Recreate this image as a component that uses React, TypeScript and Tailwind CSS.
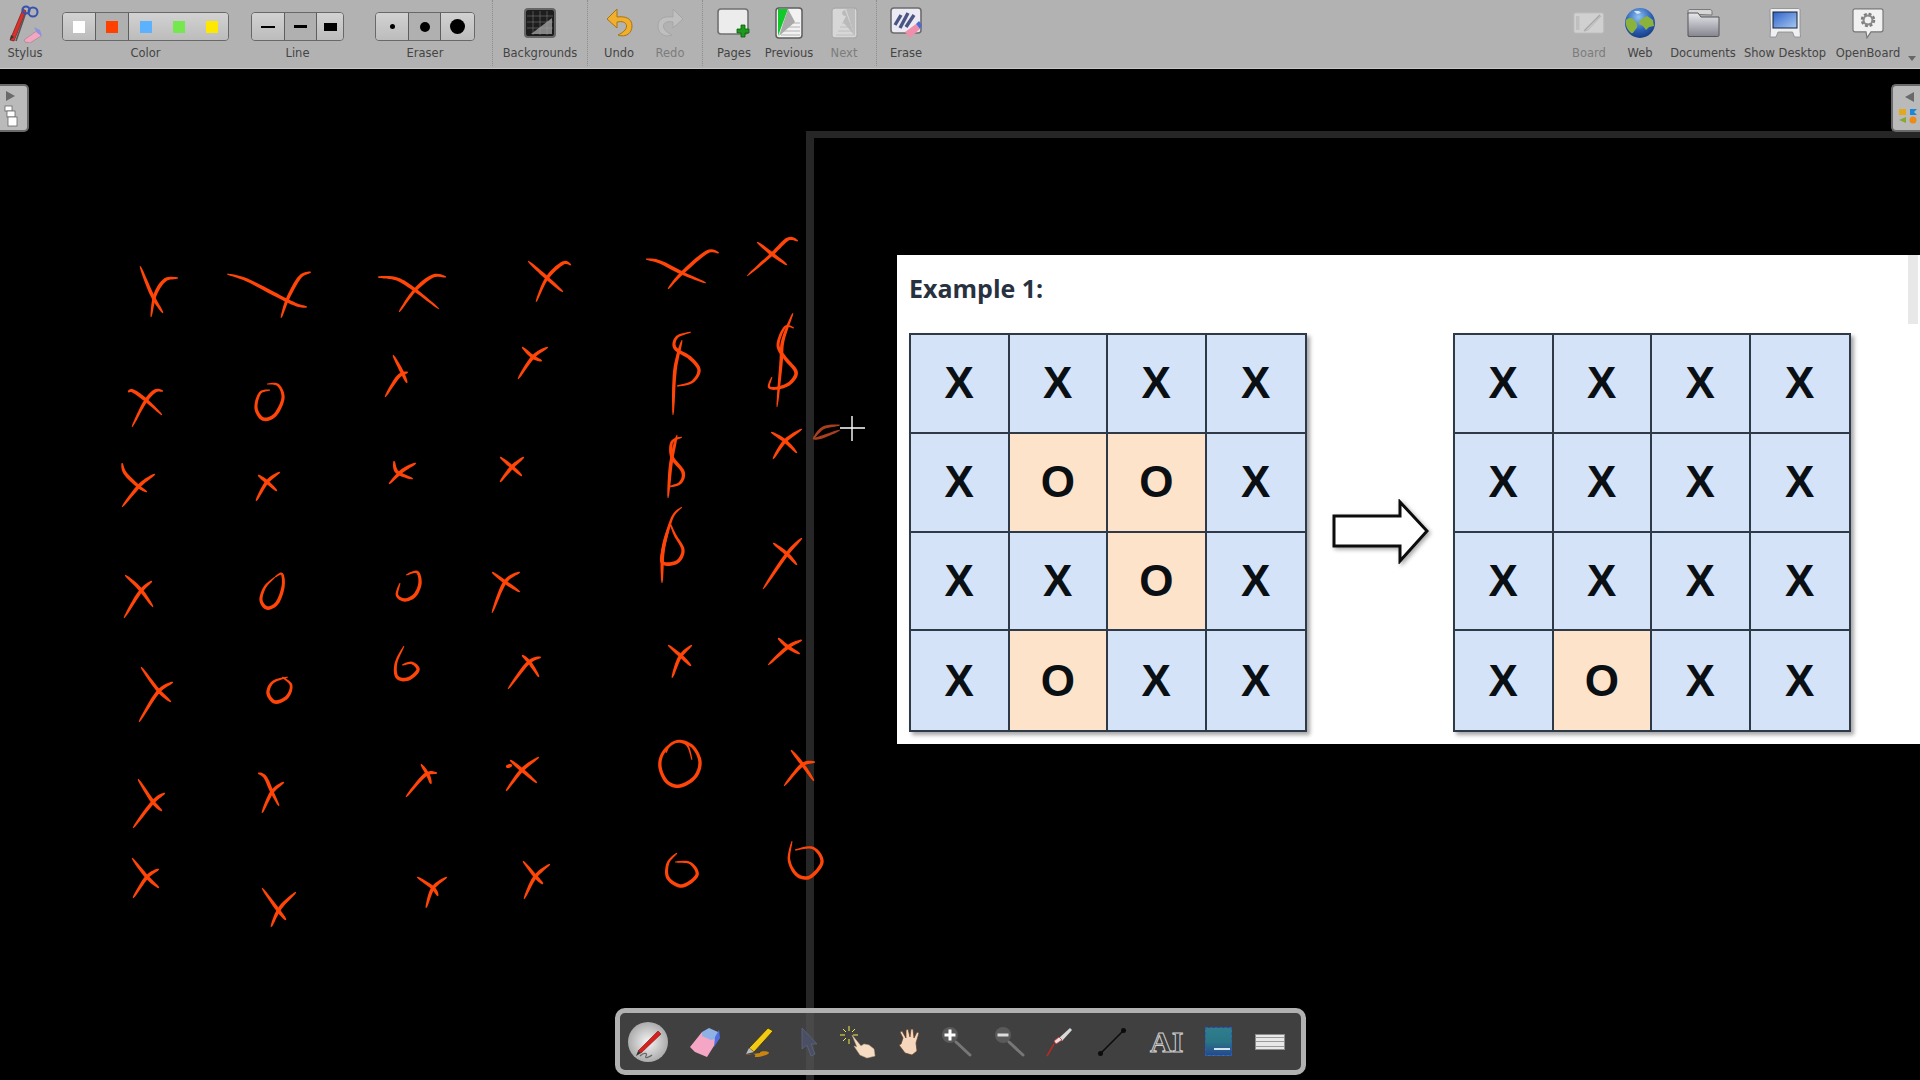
import type { ReactNode } from "react";

type Pt = [number, number];

const INK: Pt[][] = [
  // row 1
  [[140, 266], [152, 295], [163, 313]],
  [[178, 278], [165, 280], [155, 295], [151, 317]],
  [[227, 274], [247, 280], [280, 297], [297, 305], [307, 307]],
  [[311, 272], [300, 277], [288, 298], [281, 318]],
  [[378, 277], [397, 279], [415, 290], [439, 309]],
  [[446, 277], [433, 276], [415, 290], [399, 312]],
  [[528, 261], [547, 278], [563, 292]],
  [[571, 265], [563, 263], [547, 278], [536, 302]],
  [[646, 259], [660, 262], [682, 273], [706, 283]],
  [[719, 253], [707, 252], [682, 273], [668, 289]],
  [[757, 242], [772, 254], [787, 265]],
  [[798, 241], [788, 239], [772, 254], [747, 276]],
  // row 2
  [[128, 392], [133, 391], [147, 401], [162, 415]],
  [[163, 391], [155, 391], [145, 402], [132, 427]],
  [[270, 390], [260, 393], [256, 408], [263, 419], [275, 415], [283, 398], [278, 385], [267, 384]],
  [[393, 355], [402, 372], [407, 383]],
  [[408, 372], [398, 377], [385, 397]],
  [[522, 347], [533, 357], [542, 361]],
  [[548, 347], [533, 357], [518, 379]],
  [[691, 332], [677, 337], [675, 348], [690, 358], [699, 370], [692, 382], [677, 386]],
  [[682, 340], [675, 370], [673, 415]],
  [[794, 328], [785, 327], [778, 345], [785, 358], [796, 372], [790, 383], [778, 388], [769, 387], [772, 377]],
  [[793, 313], [783, 340], [781, 363], [777, 407]],
  // row 3
  [[122, 463], [125, 473], [138, 486], [147, 492]],
  [[155, 474], [140, 485], [122, 507]],
  [[258, 475], [267, 482], [277, 491]],
  [[280, 472], [267, 482], [256, 501]],
  [[394, 461], [397, 472], [413, 479]],
  [[416, 463], [402, 471], [389, 484]],
  [[500, 457], [512, 467], [522, 476]],
  [[524, 457], [512, 467], [500, 482]],
  [[682, 437], [672, 442], [672, 457], [683, 472], [680, 483], [668, 487]],
  [[677, 435], [671, 463], [668, 498]],
  [[771, 432], [785, 441], [797, 453]],
  [[802, 429], [785, 441], [773, 459]],
  // row 4
  [[125, 575], [140, 589], [153, 607]],
  [[152, 581], [140, 592], [124, 618]],
  [[275, 577], [265, 587], [261, 600], [267, 608], [277, 603], [283, 587], [282, 574], [275, 577]],
  [[406, 575], [417, 572], [420, 583], [415, 595], [405, 600], [397, 595], [400, 583]],
  [[492, 572], [505, 582], [520, 592]],
  [[520, 572], [505, 582], [492, 613]],
  [[682, 507], [672, 518], [663, 550], [663, 563], [677, 562], [683, 550], [675, 535], [670, 523]],
  [[670, 523], [663, 550], [662, 583]],
  [[773, 543], [787, 554], [797, 565]],
  [[802, 538], [787, 554], [763, 589]],
  // row 5
  [[141, 667], [158, 690], [171, 702]],
  [[173, 682], [158, 692], [139, 722]],
  [[288, 677], [273, 682], [268, 693], [275, 702], [287, 697], [291, 685], [282, 677]],
  [[404, 646], [396, 663], [397, 677], [408, 679], [418, 670], [412, 663], [402, 665]],
  [[522, 655], [530, 663], [539, 677]],
  [[541, 657], [528, 663], [508, 689]],
  [[668, 645], [682, 657], [691, 666]],
  [[692, 645], [680, 657], [672, 678]],
  [[778, 638], [788, 647], [800, 654]],
  [[802, 640], [788, 647], [768, 665]],
  // row 6
  [[138, 779], [153, 802], [162, 811]],
  [[165, 793], [153, 802], [133, 828]],
  [[258, 773], [265, 777], [272, 792], [279, 806]],
  [[284, 782], [272, 792], [262, 813]],
  [[421, 764], [428, 775], [431, 784]],
  [[437, 773], [425, 775], [406, 797]],
  [[510, 760], [522, 770], [537, 783]],
  [[539, 757], [522, 770], [506, 791]],
  [[506, 767], [512, 765]],
  [[692, 760], [687, 745], [675, 742], [663, 753], [660, 767], [667, 782], [680, 786], [695, 777], [700, 762], [693, 747], [680, 741], [670, 745], [666, 753]],
  [[791, 750], [803, 765], [814, 781]],
  [[815, 762], [802, 765], [784, 786]],
  // row 7
  [[132, 858], [147, 877], [159, 888]],
  [[159, 869], [147, 877], [133, 898]],
  [[262, 888], [278, 910], [286, 920]],
  [[296, 892], [280, 908], [271, 927]],
  [[417, 877], [433, 888], [438, 896]],
  [[447, 877], [433, 888], [426, 908]],
  [[523, 861], [536, 877], [543, 884]],
  [[550, 864], [535, 877], [524, 899]],
  [[677, 853], [668, 863], [668, 878], [682, 886], [697, 875], [690, 863], [675, 862]],
  [[792, 841], [789, 860], [797, 875], [810, 877], [822, 862], [813, 848], [795, 850]],
];

const GRID_A = ["XXXX", "XOOX", "XXOX", "XOXX"];
const GRID_B = ["XXXX", "XXXX", "XXXX", "XOXX"];

// sample a catmull-rom curve through the points, then build a tapered ribbon
function ribbon(pts: Pt[], width: number) {
  const out: Pt[] = [];
  const at = (i: number) => pts[Math.max(0, Math.min(pts.length - 1, i))];
  for (let i = 0; i < pts.length - 1; i++) {
    const [p0, p1, p2, p3] = [at(i - 1), at(i), at(i + 1), at(i + 2)];
    for (let s = 0; s < 8; s++) {
      const t = s / 8;
      const f = (k: 0 | 1) =>
        0.5 *
        (2 * p1[k] +
          (p2[k] - p0[k]) * t +
          (2 * p0[k] - 5 * p1[k] + 4 * p2[k] - p3[k]) * t * t +
          (3 * p1[k] - p0[k] - 3 * p2[k] + p3[k]) * t * t * t);
      out.push([f(0), f(1)]);
    }
  }
  out.push(pts[pts.length - 1]);
  const left: string[] = [];
  const right: string[] = [];
  out.forEach((p, i) => {
    const a = out[Math.max(0, i - 1)];
    const b = out[Math.min(out.length - 1, i + 1)];
    const dx = b[0] - a[0];
    const dy = b[1] - a[1];
    const len = Math.hypot(dx, dy) || 1;
    const u = i / (out.length - 1);
    const w = (width / 2) * (0.2 + 0.8 * Math.pow(Math.sin(Math.PI * u), 0.6));
    left.push(`${(p[0] - (dy / len) * w).toFixed(1)} ${(p[1] + (dx / len) * w).toFixed(1)}`);
    right.unshift(`${(p[0] + (dy / len) * w).toFixed(1)} ${(p[1] - (dx / len) * w).toFixed(1)}`);
  });
  return `M${left.join("L")}L${right.join("L")}Z`;
}

function InkLayer() {
  return (
    <svg className="absolute left-0 top-0" width="1920" height="1080" viewBox="0 0 1920 1080">
      {INK.map((pts, i) => (
        <path key={i} d={ribbon(pts, 3.6)} fill="#ff4508" />
      ))}
      <path d={ribbon([[813, 439], [823, 428], [840, 425]], 3)} fill="#a8401f" />
      <path d={ribbon([[840, 430], [822, 437], [813, 439]], 3)} fill="#a8401f" />
      <path d="M852 416v25M840 428h25" stroke="#000" strokeWidth="3" />
      <path d="M852 416v25M840 428h25" stroke="#fff" strokeWidth="1.4" />
    </svg>
  );
}

function TicBoard({ rows }: { rows: string[] }) {
  return (
    <div className="grid h-[399px] w-[398px] shrink-0 grid-cols-4 grid-rows-4 border-2 border-[#2e3a47] shadow-[3px_3px_4px_rgba(0,0,0,0.35)]">
      {rows.flatMap((row, r) =>
        row.split("").map((c, i) => (
          <div
            key={`${r}-${i}`}
            className={`flex items-center justify-center border-[#2e3a47] text-[44px] font-bold text-[#0a0f14] ${
              c === "O" ? "bg-[#fde3c9]" : "bg-[#d4e3f8]"
            } ${i < 3 ? "border-r-2" : ""} ${r < 3 ? "border-b-2" : ""}`}
          >
            {c}
          </div>
        ))
      )}
    </div>
  );
}

function Seg({ children, active, wide, last }: { children: ReactNode; active?: boolean; wide?: string; last?: boolean }) {
  return (
    <div
      className={`flex h-full items-center justify-center ${wide ?? "w-[33px]"} ${last ? "" : "border-r border-[#5e5e5e]"} ${
        active ? "bg-[#b0b0b0]" : "bg-linear-to-b from-[#d2d2d2] to-[#bcbcbc]"
      }`}
    >
      {children}
    </div>
  );
}

function SegLabel({ label, w, ml, children }: { label: string; w: string; ml: string; children: ReactNode }) {
  return (
    <div className={`flex shrink-0 flex-col items-center ${w} ${ml}`}>
      <div className="mt-[12px] flex h-[29px] w-full overflow-hidden rounded-[4px] border border-[#686868]">{children}</div>
      <span className="mt-[5px] text-[11.5px] leading-[14px] text-[#444]">{label}</span>
    </div>
  );
}

function Tool({ label, w, ml, off, children }: { label: string; w: string; ml?: string; off?: boolean; children: ReactNode }) {
  return (
    <div className={`flex shrink-0 flex-col items-center ${w} ${ml ?? ""}`}>
      <div className={`flex h-[46px] items-center justify-center ${off ? "opacity-60" : ""}`}>{children}</div>
      <span className={`text-[11.5px] leading-[14px] whitespace-nowrap ${off ? "text-[#7c7c7c]" : "text-[#444]"}`}>{label}</span>
    </div>
  );
}

function Sep({ ml }: { ml: string }) {
  return <div className={`h-[66px] w-0 shrink-0 border-l border-dotted border-[#8e8e8e] ${ml}`} />;
}

function StylusIcon() {
  return (
    <svg width="36" height="40" viewBox="0 0 36 40">
      <path d="M3 37 16 6l3 2L7 38z" fill="#d8302c" stroke="#7a1a18" strokeWidth=".7" />
      <path d="M3 37l1-5 3 2z" fill="#333" />
      <path d="M9 38 19 9" stroke="#555" strokeWidth="1.6" />
      <circle cx="26" cy="9" r="4.5" fill="none" stroke="#3552b0" strokeWidth="2" />
      <circle cx="19" cy="7" r="3.6" fill="none" stroke="#3552b0" strokeWidth="2" />
      <path d="M17 37 31 27l3 6-11 7-5-1z" fill="#f2a6c2" stroke="#9c7d8c" strokeWidth=".6" />
      <path d="M27 24l6 3 2 6-5-3z" fill="#8b93e0" />
    </svg>
  );
}

function BackgroundsIcon() {
  return (
    <svg width="32" height="30" viewBox="0 0 32 30">
      <rect x="1" y="1" width="30" height="28" rx="3" fill="#1d1d1d" stroke="#666" strokeWidth="2" />
      <path d="M3 8h26M3 14h26M3 20h26M9 3v24M16 3v24M23 3v24" stroke="#777" strokeWidth=".6" />
      <path d="M7 26 28 10v16z" fill="#a8a8a8" opacity=".75" />
    </svg>
  );
}

function UndoIcon({ gray }: { gray?: boolean }) {
  return (
    <svg width="27" height="30" viewBox="0 0 27 30" className={gray ? "-scale-x-100" : ""}>
      <path
        d="M11 1 1 11l10 9v-6c5-1 9 0 9.500 3.500C21 22 16 25 12 27c8 3 14-2 14-9 0-8-7-10-15-9z"
        fill={gray ? "#c9c9c9" : "#f0b02d"}
        stroke={gray ? "#9c9c9c" : "#a67512"}
        strokeWidth="1"
      />
    </svg>
  );
}

function PagesIcon() {
  return (
    <svg width="34" height="34" viewBox="0 0 34 34">
      <rect x="1" y="3" width="30" height="25" rx="3" fill="#ececec" stroke="#707070" strokeWidth="1.600" />
      <path d="M22 23h4v-4h4v4h4v4h-4v4h-4v-4h-4z" transform="translate(-2 0)" fill="#1b9c1b" stroke="#0d5c0d" strokeWidth=".8" />
    </svg>
  );
}

function PrevIcon() {
  return (
    <svg width="28" height="32" viewBox="0 0 28 32">
      <rect x="1" y="1" width="26" height="30" rx="3" fill="#f2f2f2" stroke="#5d5d5d" strokeWidth="1.500" />
      <path d="M3 2h10L3 29z" fill="#12c92c" />
      <path d="M13 2l7 13-16 14z" fill="#a9a9a9" />
      <path d="M12 16h13M10 20h15M8 24h17M6 28h19" stroke="#aaa" strokeWidth=".9" />
    </svg>
  );
}

function NextIcon() {
  return (
    <svg width="27" height="32" viewBox="0 0 27 32">
      <rect x="1" y="1" width="25" height="30" rx="3" fill="#f0f0f0" stroke="#a4a4a4" strokeWidth="1.300" />
      <path d="M15 2h9v27z" fill="#c5c5c5" />
      <path d="M14 3c-4 1-4 6 1 6l-3 6 12 14z" fill="#c0c0c0" />
      <path d="M11 16h10M9 20h13M7 24h16M5 28h19" stroke="#c2c2c2" strokeWidth=".9" />
    </svg>
  );
}

function EraseIcon() {
  return (
    <svg width="33" height="32" viewBox="0 0 33 32">
      <rect x="1" y="1" width="30" height="25" rx="3" fill="#ecebf3" stroke="#6c6c6c" strokeWidth="1.600" />
      <path d="M5 18 11 8M10 21 18 6M16 20 24 8" stroke="#4a5584" strokeWidth="3.400" />
      <path d="M15 25 26 17l4 5-10 9z" fill="#ef8fab" />
      <path d="M26 17l3-3 3 4-2 4z" fill="#4d6bd0" />
    </svg>
  );
}

function BoardIcon() {
  return (
    <svg width="32" height="22" viewBox="0 0 32 22">
      <rect x=".8" y=".8" width="30" height="20.400" rx="2" fill="#e4e4e4" stroke="#bbb" />
      <rect x="3" y="4" width="3.500" height="14" fill="#c9c9c9" />
      <path d="M11 19 27 3" stroke="#9e9e9e" strokeWidth="1.500" />
      <path d="M11 19l4-1 13-14" stroke="#b9b9b9" strokeWidth="1" fill="none" />
    </svg>
  );
}

function GlobeIcon() {
  return (
    <svg width="30" height="30" viewBox="0 0 30 30">
      <defs>
        <radialGradient id="glb" cx=".45" cy=".3" r=".8">
          <stop offset="0" stopColor="#8fc2f0" />
          <stop offset=".55" stopColor="#2a5fb8" />
          <stop offset="1" stopColor="#12306f" />
        </radialGradient>
      </defs>
      <circle cx="15" cy="15" r="15" fill="url(#glb)" />
      <path d="M1 12c4-3 6-2 8 0s5 6 2 9-3 6-6 3-5-8-4-12zM15 12l7-4 6 4 1 6-5 1-3 3-3-4-4-2z" fill="#8bb33c" />
      <path d="M9 3h5l2 2-4 1z" fill="#d8e8f6" />
    </svg>
  );
}

function FolderIcon() {
  return (
    <svg width="33" height="28" viewBox="0 0 33 28">
      <defs>
        <linearGradient id="fld" x1="0" y1="0" x2="0" y2="1">
          <stop offset="0" stopColor="#e8e8ee" />
          <stop offset="1" stopColor="#85858f" />
        </linearGradient>
      </defs>
      <path d="M1 5V2c0-1 1-1.500 2-1.500h20c1 0 2 1 2 2V6z" fill="#d6d6d6" stroke="#666" strokeWidth=".8" />
      <path d="M1 27V4h10l3 4h18v18c0 1-.5 1.500-1.500 1.500H2z" fill="url(#fld)" stroke="#555" strokeWidth="1" />
    </svg>
  );
}

function DesktopIcon() {
  return (
    <svg width="32" height="30" viewBox="0 0 32 30">
      <defs>
        <linearGradient id="scr" x1="0" y1="0" x2="1" y2="1">
          <stop offset="0" stopColor="#2e62c9" />
          <stop offset="1" stopColor="#a8c9f2" />
        </linearGradient>
      </defs>
      <path d="M1 2c0-1 1-1.500 2-1.500h26c1 0 2 .5 2 1.500v20l.5 7h-6l-2-5H9l-2 5H1l.5-7z" fill="#eef0f3" stroke="#888" strokeWidth=".8" />
      <rect x="4" y="4" width="24" height="16" fill="url(#scr)" stroke="#16202e" strokeWidth="1" />
    </svg>
  );
}

function OpenBoardIcon() {
  return (
    <svg width="32" height="31" viewBox="0 0 32 31">
      <path d="M3 .8h26c1.200 0 2 .8 2 2v19c0 1.200-.8 2-2 2H19l-4 6-1-6H3c-1.200 0-2-.8-2-2v-19C1 1.600 1.800.8 3 .8z" fill="#f1f1f1" stroke="#777" strokeWidth="1.200" />
      <circle cx="16" cy="12" r="5.500" fill="none" stroke="#7c7c7c" strokeWidth="3.500" strokeDasharray="2.600 1.700" />
      <circle cx="16" cy="12" r="4.500" fill="none" stroke="#8a8a8a" strokeWidth="2" />
    </svg>
  );
}

function TopBar() {
  return (
    <div className="flex h-[69px] w-full items-start border-b border-[#c8c8c8] bg-[#b2b2b2] [font-family:'DejaVu_Sans',sans-serif]">
      <Tool label="Stylus" w="w-[50px]">
        <StylusIcon />
      </Tool>
      <SegLabel label="Color" w="w-[167px]" ml="ml-[12px]">
        <Seg><span className="h-[12px] w-[12px] bg-white" /></Seg>
        <Seg active><span className="h-[12px] w-[12px] bg-[#ff4000]" /></Seg>
        <Seg last><span className="h-[12px] w-[12px] bg-[#5cb2ff]" /></Seg>
        <Seg last><span className="h-[12px] w-[12px] bg-[#74e84c]" /></Seg>
        <Seg last><span className="h-[12px] w-[12px] bg-[#ffe800]" /></Seg>
      </SegLabel>
      <SegLabel label="Line" w="w-[93px]" ml="ml-[22px]">
        <Seg wide="w-[33px]"><span className="h-[2px] w-[14px] bg-black" /></Seg>
        <Seg active wide="w-[32px]"><span className="h-[3px] w-[13px] bg-black" /></Seg>
        <Seg last wide="flex-1"><span className="h-[8px] w-[13px] bg-black" /></Seg>
      </SegLabel>
      <SegLabel label="Eraser" w="w-[100px]" ml="ml-[31px]">
        <Seg wide="w-[33px]"><span className="h-[5px] w-[5px] rounded-full bg-black" /></Seg>
        <Seg active wide="w-[32px]"><span className="h-[10px] w-[10px] rounded-full bg-black" /></Seg>
        <Seg last wide="flex-1"><span className="h-[15px] w-[15px] rounded-full bg-black" /></Seg>
      </SegLabel>
      <Sep ml="ml-[17px]" />
      <Tool label="Backgrounds" w="w-[80px]" ml="ml-[7px]">
        <BackgroundsIcon />
      </Tool>
      <Sep ml="ml-[7px]" />
      <Tool label="Undo" w="w-[50px]" ml="ml-[6px]">
        <UndoIcon />
      </Tool>
      <Tool label="Redo" w="w-[50px]" ml="ml-[1px]" off>
        <UndoIcon gray />
      </Tool>
      <Sep ml="ml-[7px]" />
      <Tool label="Pages" w="w-[56px]" ml="ml-[3px]">
        <PagesIcon />
      </Tool>
      <Tool label="Previous" w="w-[56px]" ml="ml-[-1px]">
        <PrevIcon />
      </Tool>
      <Tool label="Next" w="w-[56px]" ml="ml-[-1px]" off>
        <NextIcon />
      </Tool>
      <Sep ml="ml-[4px]" />
      <Tool label="Erase" w="w-[56px]" ml="ml-[1px]">
        <EraseIcon />
      </Tool>
      <div className="ml-auto flex">
        <Tool label="Board" w="w-[50px]" off>
          <BoardIcon />
        </Tool>
        <Tool label="Web" w="w-[50px]" ml="ml-[1px]">
          <GlobeIcon />
        </Tool>
        <Tool label="Documents" w="w-[70px]" ml="ml-[3px]">
          <FolderIcon />
        </Tool>
        <Tool label="Show Desktop" w="w-[84px]" ml="ml-[5px]">
          <DesktopIcon />
        </Tool>
        <Tool label="OpenBoard" w="w-[70px]" ml="ml-[6px]">
          <OpenBoardIcon />
        </Tool>
        <div className="mr-[4px] ml-[5px] mt-[56px] h-0 w-0 border-x-[4px] border-t-[5px] border-x-transparent border-t-[#666]" />
      </div>
    </div>
  );
}

function LeftDrawer() {
  return (
    <div className="absolute left-0 top-[84px] flex h-[48px] w-[29px] flex-col items-center gap-[4px] rounded-r-[5px] border-2 border-l-0 border-[#6a6a6a] bg-[#bababa] pt-[5px]">
      <span className="ml-[-6px] h-0 w-0 border-y-[5px] border-l-[9px] border-y-transparent border-l-[#6a6a6a]" />
      <svg width="14" height="22" viewBox="0 0 14 22" className="ml-[-6px]">
        <rect x="1" y="1" width="7" height="5" fill="#fff" stroke="#666" strokeWidth=".8" />
        <rect x="3" y="6" width="8" height="6" fill="#fff" stroke="#666" strokeWidth=".8" />
        <rect x="4" y="12" width="9" height="9" fill="#fff" stroke="#666" strokeWidth=".8" />
      </svg>
    </div>
  );
}

function RightDrawer() {
  return (
    <div className="absolute right-0 top-[84px] flex h-[48px] w-[29px] flex-col items-center gap-[6px] rounded-l-[5px] border-2 border-r-0 border-[#6a6a6a] bg-[#bababa] pt-[6px]">
      <span className="ml-[6px] h-0 w-0 border-y-[5px] border-r-[9px] border-y-transparent border-r-[#6a6a6a]" />
      <svg width="20" height="16" viewBox="0 0 20 16" className="ml-[3px]">
        <rect x="1" y="1" width="7" height="6" fill="#e3a91c" />
        <path d="M12 1h7l-3 3 3 3h-7z" fill="#1d86d6" />
        <path d="M8 9v6L1 12z" fill="#88a832" />
        <circle cx="15" cy="12" r="3.500" fill="#ee8a18" />
      </svg>
    </div>
  );
}

function BottomBar() {
  return (
    <div className="absolute left-[615px] top-[1008px] flex h-[67px] w-[691px] items-center rounded-[10px] border-[5px] border-[#b1b1b1] bg-[#565656]/74">
      <div className="ml-[8px] flex h-[40px] w-[40px] items-center justify-center rounded-full bg-radial from-[#f5f5f5] to-[#8f8f8f]">
        <svg width="34" height="34" viewBox="0 0 34 34">
          <path d="M7 26 27 6l3 3L10 28z" fill="#d8201c" stroke="#7a1412" strokeWidth=".6" />
          <path d="M7 26l-2 5 5-3z" fill="#333" />
          <path d="M9 31c4-4 8-3 6 0s4 1 6-1" fill="none" stroke="#666" strokeWidth="1.200" />
        </svg>
      </div>
      <svg width="32" height="32" viewBox="0 0 32 32" className="ml-[21px]">
        <path d="M1 21 13 6l10 4 7 2-12 19-12-5z" fill="#f5a6c4" />
        <path d="M13 6l7-4 9 4 1 6-8 2-9-4z" fill="#8fb1e6" />
        <path d="M30 4l1 8-6 9 1-10z" fill="#4f6fe0" />
      </svg>
      <svg width="30" height="32" viewBox="0 0 30 32" className="ml-[23px]">
        <path d="M5 22 24 2l5 3L10 26z" fill="#f2c913" stroke="#3a3108" strokeWidth=".8" />
        <path d="M5 22l-3 6 8-2z" fill="#bbb" />
        <path d="M1 29c6-2 12-1 10 1s8 1 13-2-9-4-8-1" fill="#c9860f" />
      </svg>
      <svg width="16" height="30" viewBox="0 0 16 30" className="ml-[27px]">
        <path d="M1 1v21l5-4 4 11 4-2-4-10h6z" fill="#4a4f63" stroke="#5d6480" strokeWidth=".8" />
      </svg>
      <svg width="38" height="34" viewBox="0 0 38 34" className="ml-[22px]">
        <path d="M10 1v5M10 14v5M1 10h5M14 10h5M4 4l3 3M16 4l-3 3M4 16l3-3" stroke="#f4e84a" strokeWidth="1" />
        <path d="M13 10l9 11 3-2 5 1 5 4 1 7-8 2-7-3-6-9 3 1z" fill="#f6dcc2" stroke="#c9a98c" strokeWidth=".5" />
      </svg>
      <svg width="24" height="28" viewBox="0 0 24 28" className="ml-[22px]">
        <path d="M4 10 1 4l2-1 4 7 0-8 2-1 2 8 1-8 2 0 1 9 3-6 2 1-3 10 1 8-5 4-7-2-6-8 2-1z" fill="#f4d7bd" stroke="#5f3b22" strokeWidth=".7" />
      </svg>
      <svg width="32" height="32" viewBox="0 0 32 32" className="ml-[18px]">
        <circle cx="9" cy="9" r="8" fill="#5a5a5a" />
        <path d="M9 3.500v11M3.500 9h11" stroke="#fff" strokeWidth="3" />
        <path d="M15 16l14 13" stroke="#777" strokeWidth="3" strokeLinecap="round" />
      </svg>
      <svg width="32" height="32" viewBox="0 0 32 32" className="ml-[21px]">
        <circle cx="9" cy="9" r="8" fill="#5a5a5a" />
        <path d="M3.500 9h11" stroke="#ddd" strokeWidth="3" />
        <path d="M15 16l14 13" stroke="#777" strokeWidth="3" strokeLinecap="round" />
      </svg>
      <svg width="28" height="30" viewBox="0 0 28 30" className="ml-[20px]">
        <path d="M16 14 26 3l-2-2-11 10z" fill="#d8d8d8" />
        <path d="M10 17l6-4-3-3-5 4z" fill="#e8e0e0" stroke="#c33" strokeWidth=".8" />
        <path d="M8 17 1 29" stroke="#b92a24" strokeWidth="1.500" />
      </svg>
      <svg width="30" height="30" viewBox="0 0 30 30" className="ml-[23px]">
        <path d="M3 27 27 3" stroke="#0c0c0c" strokeWidth="1.600" />
        <circle cx="3.500" cy="26.500" r="2.500" fill="#0c0c0c" />
        <circle cx="26.500" cy="3.500" r="2.500" fill="#0c0c0c" />
      </svg>
      <div className="ml-[23px] flex w-[30px] items-center [font-family:'Liberation_Serif',serif] text-[30px] font-bold leading-[30px] text-[#3e3e3e] [-webkit-text-stroke:1px_#cfcfcf]">
        AI
      </div>
      <div className="ml-[25px] h-[29px] w-[27px] border border-dashed border-[#2b5bb8] bg-linear-to-b from-[#2f7d8d] via-[#2a7687] to-[#27488d]">
        <div className="mt-[20px] ml-[8px] h-[2px] w-[16px] bg-[#d5e4ea]" />
      </div>
      <div className="ml-[23px] flex h-[16px] w-[30px] flex-col justify-between border border-[#8d8d8d] bg-[#e8e8e8] py-[2px]">
        <div className="h-px bg-[#9a9a9a]" />
        <div className="h-px bg-[#9a9a9a]" />
        <div className="h-px bg-[#9a9a9a]" />
      </div>
    </div>
  );
}

export default function App() {
  return (
    <div className="relative h-[1080px] w-[1920px] overflow-hidden bg-black [font-family:'Liberation_Sans',Arial,sans-serif]">
      <TopBar />
      {/* the board frame that runs behind the ink */}
      <div className="absolute left-[806px] top-[131px] h-[949px] w-[1114px] border-l-[8px] border-t-[7px] border-[#262626]" />
      <LeftDrawer />
      <RightDrawer />
      <div className="absolute left-[897px] top-[255px] h-[489px] w-[1023px] bg-white pl-[12px]">
        <div className="h-[78px] pt-[18px] text-[25px] font-bold leading-[30px] text-[#28323f] [font-family:'Open_Sans',sans-serif]">
          Example 1:
        </div>
        <div className="flex items-start">
          <TicBoard rows={GRID_A} />
          <svg width="97" height="65" viewBox="0 0 97 65" className="ml-[25px] mr-[24px] mt-[166px] shrink-0 drop-shadow-[2px_2px_2px_rgba(0,0,0,0.35)]">
            <path d="M2 17h66V3l27 29-27 30V47H2z" fill="#fff" stroke="#0c0c0c" strokeWidth="3" />
          </svg>
          <TicBoard rows={GRID_B} />
        </div>
        <div className="absolute right-[2px] top-0 h-[69px] w-[10px] bg-[#e8e8e8]" />
      </div>
      <InkLayer />
      <BottomBar />
    </div>
  );
}
